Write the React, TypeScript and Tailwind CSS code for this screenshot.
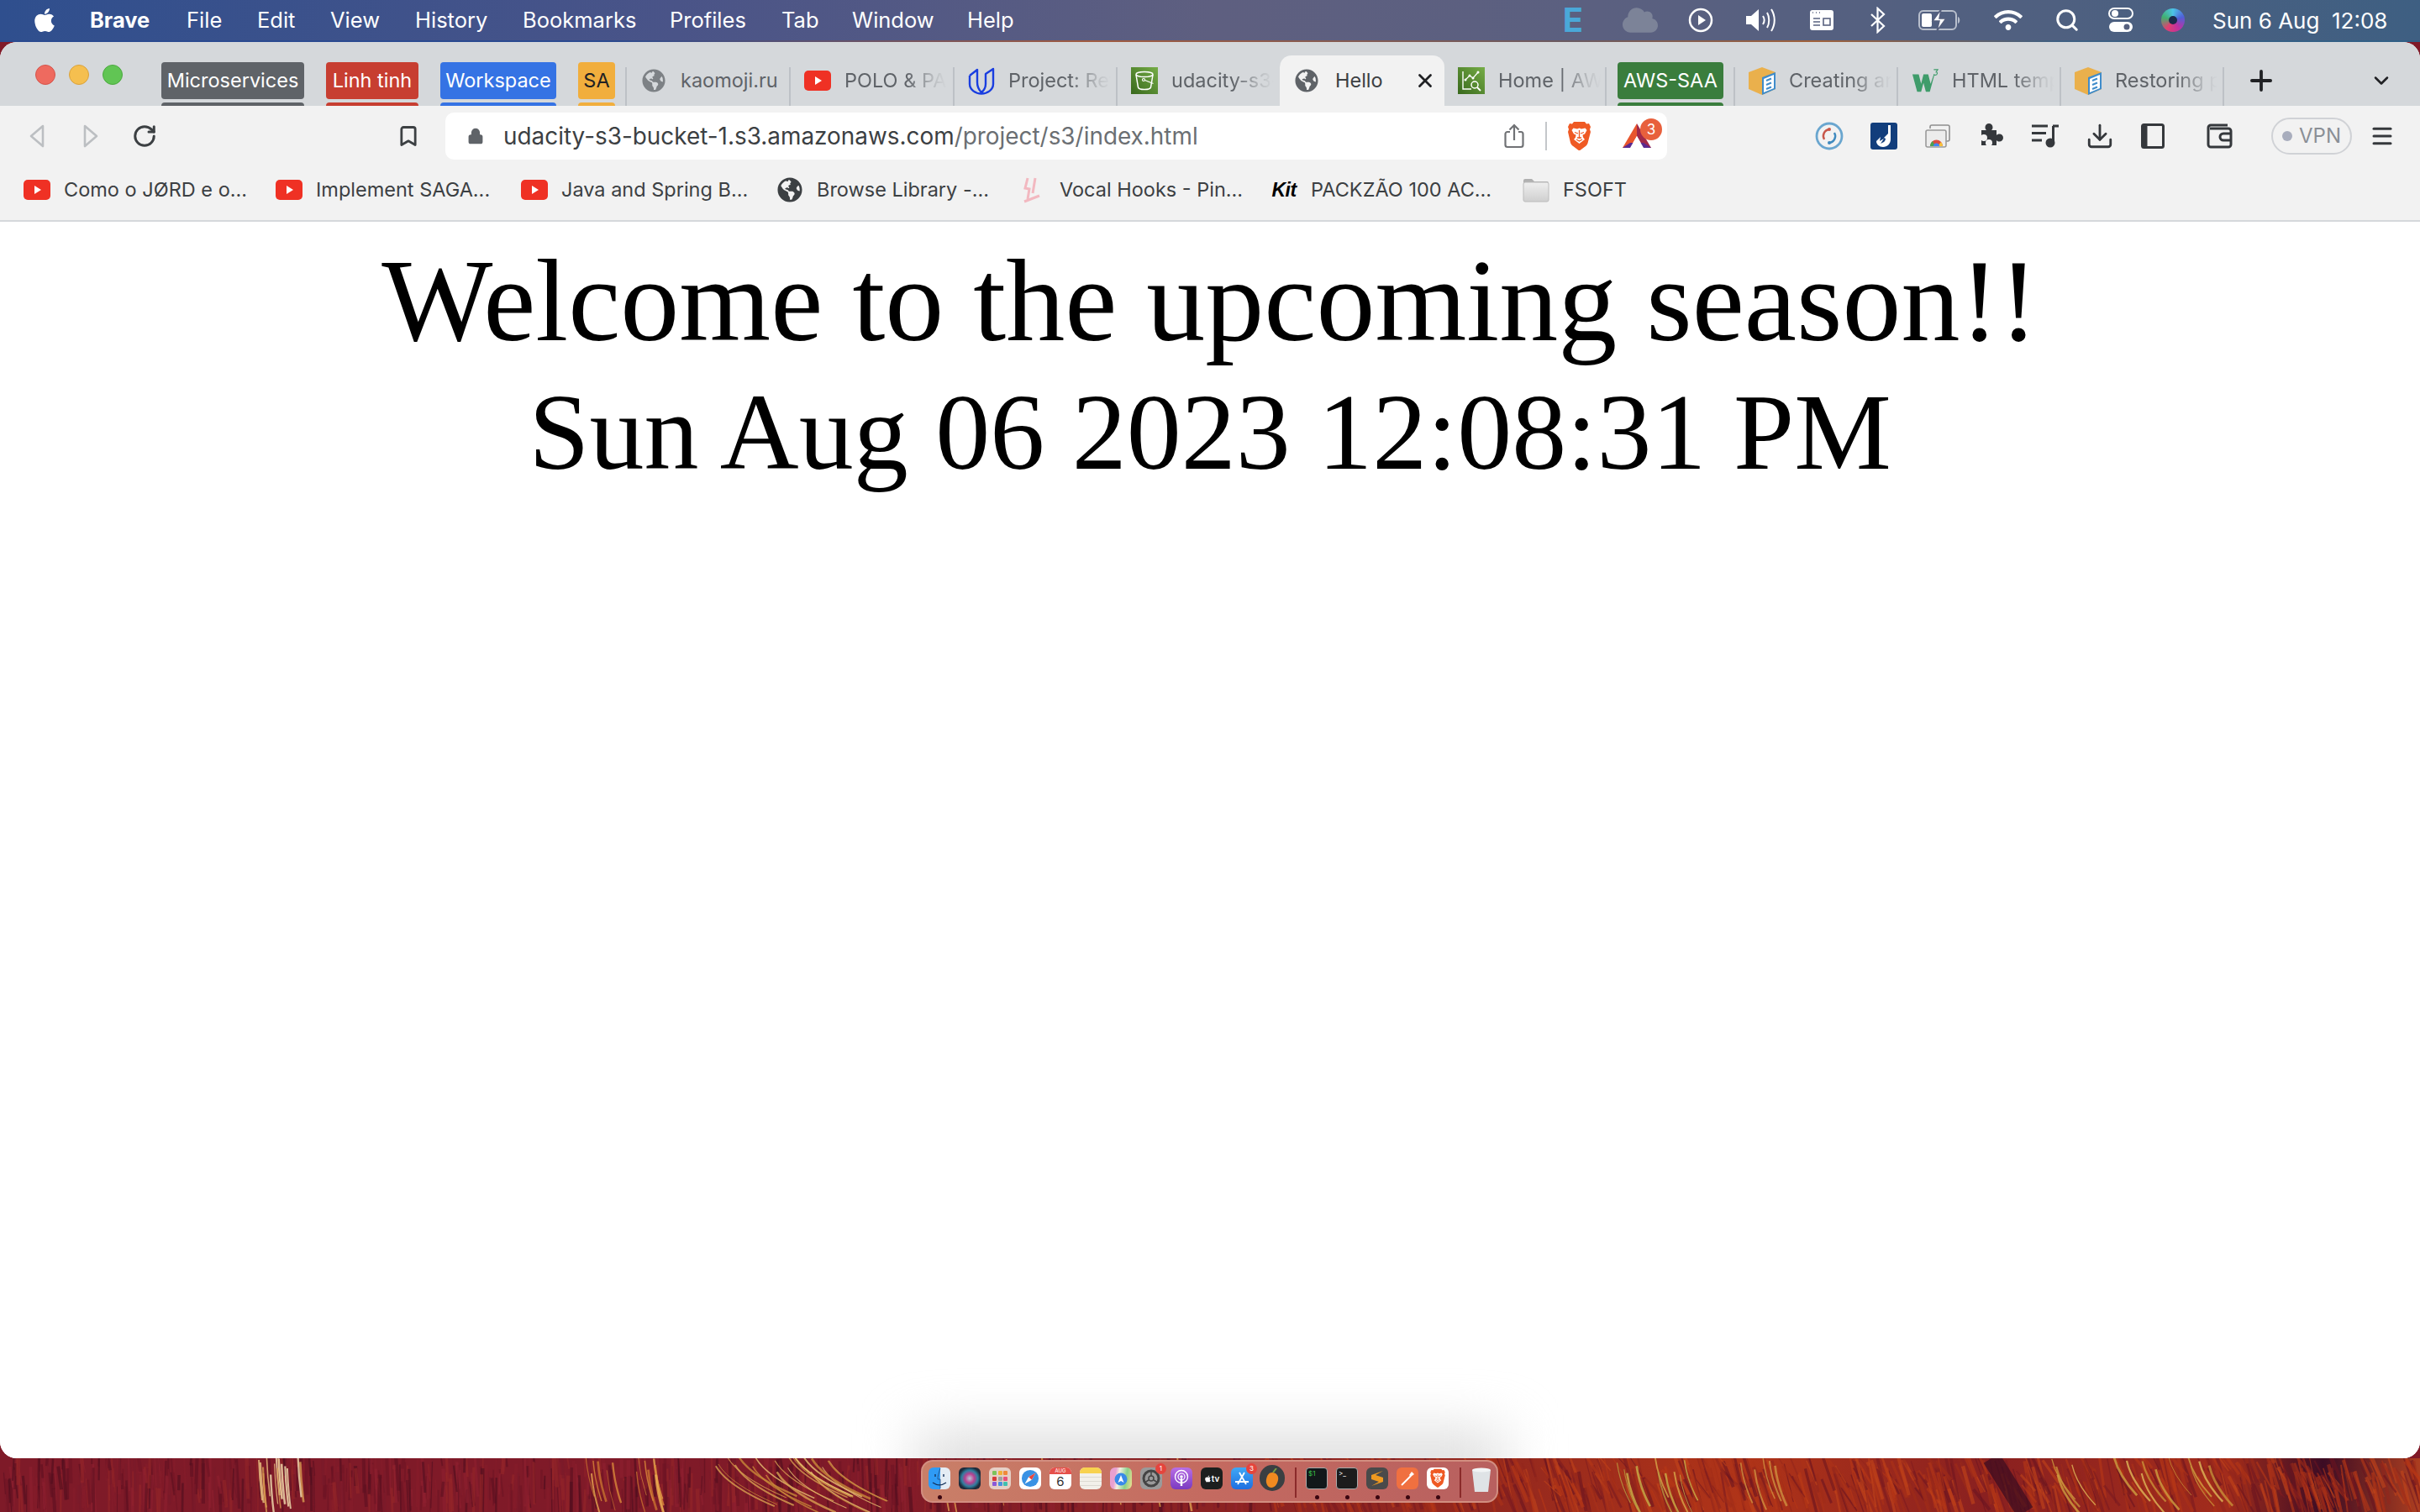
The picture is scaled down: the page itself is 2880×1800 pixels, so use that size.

import React from "react";
import { FaApple, FaGlobeAmericas, FaCloud, FaWifi } from "react-icons/fa";
import { Search, Download, Plus, ChevronDown, X, RotateCw, Bookmark, Lock, Menu } from "lucide-react";

const SANS = "font-['Inter','Liberation_Sans',sans-serif]";

function Wallpaper() {
  let s = 12345;
  const r = () => { s = (s * 16807) % 2147483647; return s / 2147483647; };
  const pick = (a: string[]) => a[Math.floor(r() * a.length)];
  const strokes: React.ReactElement[] = [];
  const darkL = ["#5d1020", "#6e1424", "#861c2a", "#8f2030", "#7a1a2a", "#4f0e1e", "#962628"];
  const darkR = ["#b83816", "#a02c18", "#7a1a20", "#6a1420", "#c2441a", "#93261c", "#ac3218"];
  for (let i = 0; i < 1700; i++) {
    const x = r() * 2880;
    const right = x > 1500;
    const y = r() * 50 - 12;
    const slant = right ? 8 + r() * 12 : -2 + r() * 6;
    const len = 16 + r() * 46;
    const color = pick(right ? darkR : darkL);
    strokes.push(<line key={i} x1={x} y1={y} x2={x + slant} y2={y + len} stroke={color} strokeWidth={1 + r() * 3.4} opacity={0.6} />);
  }
  const clusters: [number, number, number, number, string[]][] = [
    [304, 372, 4, 16, ["#e8c080", "#f4e0b0", "#d89a50"]],
    [696, 784, 10, 14, ["#d8883a", "#e8a850", "#c87030"]],
    [850, 990, 70, 22, ["#d8a050", "#e8c070", "#c88838"]],
    [1120, 1500, 6, 14, ["#e0a050", "#d89040"]],
    [1917, 2006, 16, 10, ["#c8b048", "#d8a848", "#b89a40"]],
    [2070, 2120, 14, 5, ["#d09040"]],
    [2420, 2640, 28, 14, ["#d0a040", "#c89038", "#e0b858"]],
  ];
  clusters.forEach(([a, b, dx, n, colors], ci) => {
    for (let i = 0; i < n; i++) {
      const x = a + r() * (b - a);
      const y = -4 + r() * 24;
      strokes.push(
        <path key={`c${ci}-${i}`} d={`M${x} ${y} Q${x + dx * 0.2} ${y + 24} ${x + dx} ${y + 48}`} fill="none" stroke={pick(colors)} strokeWidth={0.8 + r() * 2} opacity={0.8} />
      );
    }
  });
  return (
    <svg className="absolute bottom-0 left-0" width="2880" height="64" viewBox="0 0 2880 64" aria-hidden="true">
      <defs>
        <linearGradient id="wp" x1="0" x2="1" y1="0" y2="0">
          <stop offset="0" stopColor="#7e1a28" />
          <stop offset="0.35" stopColor="#801a28" />
          <stop offset="0.62" stopColor="#94281e" />
          <stop offset="0.72" stopColor="#b03418" />
          <stop offset="0.82" stopColor="#8a2020" />
          <stop offset="0.92" stopColor="#a22c1c" />
          <stop offset="0.96" stopColor="#3c0c24" />
          <stop offset="1" stopColor="#ac3e20" />
        </linearGradient>
      </defs>
      <rect width="2880" height="64" fill="url(#wp)" />
      {strokes}
      <path d="M2370 0 L2410 64" stroke="#3a0c20" strokeWidth="22" opacity="0.7" />
    </svg>
  );
}

function Yt({ className = "w-[32px] h-[24px]" }: { className?: string }) {
  return (
    <svg className={className} viewBox="0 0 32 24" aria-hidden="true">
      <rect width="32" height="24" rx="5" fill="#ef3124" />
      <path d="M13 7l8 5-8 5z" fill="#fff" />
    </svg>
  );
}

function Cube() {
  return (
    <svg className="w-[32px] h-[33px]" viewBox="0 0 32 33" aria-hidden="true">
      <path d="M16 0L32 6v20L16 33 0 26V6z" fill="#eab04c" />
      <path d="M16 12L32 6v20L16 33z" fill="#3f8ccb" />
      <path d="M18 14l12-5v16l-12 5z" fill="#fff" />
      <path d="M21 16l6-2.5M21 21l6-2.5M21 26l6-2.5" stroke="#3f8ccb" strokeWidth="2" />
    </svg>
  );
}

function Brave({ className = "w-[27px] h-[37px]" }: { className?: string }) {
  return (
    <svg className={className} viewBox="0 0 27 37" aria-hidden="true">
      <path d="M7 1h13l2 2.5 3-.5 2 4-1 3 1 3-3.5 13.5c-.6 2-2 3.200-3.500 4.300L15 34.500c-1 .8-2 .8-3 0l-5.500-4.200C5 29.200 3.600 28 3 26L0 13l1-3-1-3 2-4 3 .5z" fill="#ef5a24" />
      <path d="M6.500 8.500l4.500 1 2.500-1 2.500 1 4.500-1 2 2.500-2.500 4.500-2.500 1 .5 3 2 2.500-6.500 5-6.500-5 2-2.500.5-3-2.500-1L4.500 11z" fill="#fff" />
      <path d="M8 13.500l4 1.500M19 13.500l-4 1.500M13.500 11v10M10 22l3.500 2 3.500-2M11 20h5" stroke="#ef5a24" strokeWidth="1.3" fill="none" />
    </svg>
  );
}

function Chip({ label, bg, w, ml, dark }: { label: string; bg: string; w: string; ml: string; dark?: boolean }) {
  return (
    <div className={`flex flex-col shrink-0 pt-[24px] h-full overflow-hidden ${w} ${ml}`}>
      <div className={`h-[44px] shrink-0 rounded-[4px] flex items-center justify-center text-[23.5px] whitespace-nowrap ${bg} ${dark ? "text-[#202124]" : "text-white"}`}>{label}</div>
      <div className={`mt-[4px] h-[10px] shrink-0 rounded-t-[4px] ${bg}`} />
    </div>
  );
}

function Tab({ icon, label, fade = true, sep = true, w = "w-[195px]" }: { icon: React.ReactNode; label: string; fade?: boolean; sep?: boolean; w?: string }) {
  return (
    <div className={`relative shrink-0 h-full pt-[30px] pl-[16px] flex items-start gap-[16px] ${w}`}>
      <div className="w-[32px] h-[32px] flex items-center justify-center shrink-0">{icon}</div>
      <div className={`w-[122px] overflow-hidden whitespace-nowrap text-[23.5px] leading-[32px] text-[#5f6368] ${fade ? "[mask-image:linear-gradient(to_right,#000_60%,#0003_88%,transparent_100%)]" : ""}`}>{label}</div>
      {sep && <div className="absolute right-0 top-[30px] bottom-0 w-[2px] bg-[#bdc1c6]" />}
    </div>
  );
}

function Mark({ label, icon, w }: { label: string; icon: React.ReactNode; w: string }) {
  return (
    <div className={`flex items-center shrink-0 ${w}`}>
      <div className="w-[32px] h-[32px] flex items-center justify-center shrink-0 mr-[16px]">{icon}</div>
      <span className="text-[23.5px] text-[#3c4043] whitespace-nowrap">{label}</span>
    </div>
  );
}

function TB({ children, ml }: { children: React.ReactNode; ml: string }) {
  return <div className={`w-[44px] h-[44px] shrink-0 flex items-center justify-center ${ml}`}>{children}</div>;
}

function DockItem({ children, dot, badge, w = "w-[26px]", ml = "ml-[10px]" }: { children: React.ReactNode; dot?: boolean; badge?: string; w?: string; ml?: string }) {
  return (
    <div className={`relative h-[26px] shrink-0 ${w} ${ml}`}>
      {children}
      {badge && <div className="absolute -top-[5px] -right-[5px] w-[13px] h-[13px] rounded-full bg-[#e5443c] text-white text-[8px] leading-[13px] text-center">{badge}</div>}
      {dot && <div className="absolute left-[11px] top-[33px] w-[5px] h-[5px] rounded-full bg-[#3a0610]" />}
    </div>
  );
}

function Tile({ children, bg }: { children?: React.ReactNode; bg: string }) {
  return <div className={`w-[26px] h-[26px] rounded-[6px] overflow-hidden flex items-center justify-center ${bg}`}>{children}</div>;
}

function MI({ children, w, ml }: { children: React.ReactNode; w: string; ml: string }) {
  return <div className={`flex items-center justify-center shrink-0 text-white ${w} ${ml}`}>{children}</div>;
}

export default function App() {
  return (
    <div className={`relative w-[2880px] h-[1800px] overflow-hidden bg-[#801a28] ${SANS}`}>
      <Wallpaper />
      <div className="relative h-[48px] flex items-center bg-[linear-gradient(90deg,#2f4f8e_0%,#4a5488_28%,#5e5f80_50%,#5b6080_66%,#4f6080_85%,#3e5f82_100%)]">
        <div className="w-[30px] ml-[38px] flex justify-center shrink-0"><FaApple className="text-white text-[32px]" /></div>
        <div className="w-[1789px] shrink-0 flex items-center text-[25.5px] text-white">
          <div className="w-[115px] ml-[39px] shrink-0 font-bold">Brave</div>
          <div className="w-[84px] shrink-0">File</div>
          <div className="w-[87px] shrink-0">Edit</div>
          <div className="w-[101px] shrink-0">View</div>
          <div className="w-[128px] shrink-0">History</div>
          <div className="w-[175px] shrink-0">Bookmarks</div>
          <div className="w-[133px] shrink-0">Profiles</div>
          <div className="w-[84px] shrink-0">Tab</div>
          <div className="w-[137px] shrink-0">Window</div>
          <div className="w-[70px] shrink-0">Help</div>
        </div>
        <MI w="w-[30px]" ml="ml-0"><span className="text-[40px] font-bold leading-[48px] text-[#4aa8d8]">E</span></MI>
        <MI w="w-[50px]" ml="ml-[40px]"><FaCloud className="text-[#7c8398] text-[42px]" /></MI>
        <MI w="w-[34px]" ml="ml-[30px]">
          <svg width="30" height="30" viewBox="0 0 30 30" aria-hidden="true"><circle cx="15" cy="15" r="13" fill="none" stroke="#fff" strokeWidth="2.5" /><path d="M12 9l9 6-9 6z" fill="#fff" /></svg>
        </MI>
        <MI w="w-[42px]" ml="ml-[34px]">
          <svg width="40" height="30" viewBox="0 0 40 30" aria-hidden="true"><path d="M2 10h6l9-8v26l-9-8H2z" fill="#fff" /><path d="M22 10c2 3 2 7 0 10M27 6c3 5 3 13 0 18M32 2c5 8 5 18 0 26" fill="none" stroke="#fff" strokeWidth="2" /></svg>
        </MI>
        <MI w="w-[32px]" ml="ml-[35px]">
          <svg width="30" height="26" viewBox="0 0 30 26" aria-hidden="true"><rect x="1" y="1" width="28" height="24" rx="3" fill="#fff" /><path d="M5 11h8M5 15h8M5 19h8" stroke="#5a6380" strokeWidth="1.6" /><path d="M4 4h1M8 4h1M12 4h1" stroke="#5a6380" strokeWidth="1.4" /><rect x="17" y="11" width="8" height="8" fill="none" stroke="#5a6380" strokeWidth="1.6" /></svg>
        </MI>
        <MI w="w-[24px]" ml="ml-[39px]">
          <svg width="20" height="32" viewBox="0 0 20 32" aria-hidden="true"><path d="M2 9l15 14-7.500 7V2L17 9 2 23" fill="none" stroke="#fff" strokeWidth="2.200" /></svg>
        </MI>
        <MI w="w-[52px]" ml="ml-[36px]">
          <svg width="52" height="26" viewBox="0 0 52 26" aria-hidden="true"><rect x="1" y="2" width="44" height="22" rx="5" fill="none" stroke="#b8bfcc" strokeWidth="2" /><rect x="4" y="5" width="12" height="16" rx="2" fill="#fff" /><path d="M47 9c3 1 3 7 0 8z" fill="#b8bfcc" /><path d="M27 0L17 14h8l-3 12 11-15h-8z" fill="#fff" stroke="#56607e" strokeWidth="1.5" /></svg>
        </MI>
        <MI w="w-[36px]" ml="ml-[37px]"><FaWifi className="text-white text-[34px]" /></MI>
        <MI w="w-[30px]" ml="ml-[37px]"><Search className="text-white w-[30px] h-[30px]" strokeWidth={2.4} /></MI>
        <MI w="w-[30px]" ml="ml-[34px]">
          <svg width="30" height="30" viewBox="0 0 30 30" aria-hidden="true"><rect x="1" y="1" width="28" height="12" rx="6" fill="none" stroke="#fff" strokeWidth="2" /><circle cx="8" cy="7" r="4" fill="#fff" /><rect x="1" y="17" width="28" height="12" rx="6" fill="#fff" /><circle cx="22" cy="23" r="3.5" fill="#56607e" /></svg>
        </MI>
        <MI w="w-[30px]" ml="ml-[32px]">
          <div className="w-[28px] h-[28px] rounded-full bg-[conic-gradient(#4cc4e8,#5060d8,#c030a0,#e04070,#40b070,#4cc4e8)] flex items-center justify-center"><div className="w-[10px] h-[10px] rounded-full bg-[#1c2a4a]" /></div>
        </MI>
        <div className="ml-[32px] text-[26px] text-white whitespace-pre shrink-0">Sun 6 Aug  12:08</div>
      </div>
      <div className="relative h-[2px] bg-[linear-gradient(90deg,#2a4a90_0%,#2a4a90_25%,#a05a40_45%,#6a5a60_65%,#a0603a_75%,#3e5f82_85%,#2f5f86_100%)]" />

      <div className="relative h-[1686px] rounded-[20px] overflow-hidden bg-white flex flex-col">
        <div className="h-[76px] bg-[#d5d8db] flex items-stretch shrink-0">
          <div className="flex w-[192px] shrink-0 pt-[27px] pl-[42px] gap-[16px]">
            <div className="w-[24px] h-[24px] rounded-full bg-[#ee6a5f] border border-[#d5534a]" />
            <div className="w-[24px] h-[24px] rounded-full bg-[#f5bf4f] border border-[#d9a23c]" />
            <div className="w-[24px] h-[24px] rounded-full bg-[#61c554] border border-[#4ba93f]" />
          </div>
          <Chip label="Microservices" bg="bg-[#5f6368]" w="w-[170px]" ml="" />
          <Chip label="Linh tinh" bg="bg-[#c73e31]" w="w-[110px]" ml="ml-[26px]" />
          <Chip label="Workspace" bg="bg-[#3573e4]" w="w-[138px]" ml="ml-[26px]" />
          <Chip label="SA" bg="bg-[#f1ae3d]" w="w-[44px]" ml="ml-[26px]" dark />
          <div className="ml-[12px] w-[2px] mt-[30px] bg-[#bdc1c6]" />
          <Tab label="kaomoji.ru" fade={false} icon={<FaGlobeAmericas className="text-[#7d8185] text-[28px]" />} />
          <Tab label="POLO & PAN" icon={<Yt />} />
          <Tab label="Project: Refactor" w="w-[194px]" icon={
            <svg width="32" height="33" viewBox="0 0 32 33" aria-hidden="true"><path d="M2 10L11 3V18C11 24 13 27 16 30M2 10V20C2 27 9 31.500 16 31.500C23 31.500 30 27 30 20V2L21 8V20C21 25 18.500 28 16 30" fill="none" stroke="#1a3ee0" strokeWidth="2.400" strokeLinejoin="round" /></svg>
          } />
          <Tab label="udacity-s3-bucket" sep={false} w="w-[193px]" icon={
            <svg width="32" height="32" viewBox="0 0 32 32" aria-hidden="true"><defs><linearGradient id="awsg" x1="0" y1="1" x2="1" y2="0"><stop offset="0" stopColor="#38681c" /><stop offset="1" stopColor="#76ad47" /></linearGradient></defs><rect width="32" height="32" fill="url(#awsg)" /><path d="M6 9l2.500 15c.3 1.500 3.500 2.500 7.500 2.500s7.200-1 7.500-2.500L26 9" fill="none" stroke="#fff" strokeWidth="1.500" /><ellipse cx="16" cy="8.500" rx="10" ry="3" fill="none" stroke="#fff" strokeWidth="1.500" /><circle cx="15" cy="15" r="1.500" fill="none" stroke="#fff" strokeWidth="1.200" /><path d="M16.500 15.500l10 4" stroke="#fff" strokeWidth="1.300" /></svg>
          } />
          <div className="relative shrink-0 w-[196px] mt-[16px] pt-[14px] pl-[18px] bg-[#f2f2f2] rounded-t-[14px] flex items-start text-[#3c4043]">
            <div className="w-[28px] h-[32px] flex items-center justify-center shrink-0"><FaGlobeAmericas className="text-[#5f6368] text-[28px]" /></div>
            <span className="ml-[20px] leading-[32px] text-[23.5px]">Hello</span>
            <X className="absolute left-[160px] top-[17px] w-[26px] h-[26px] text-[#202124]" strokeWidth={2.6} />
          </div>
          <Tab label="Home | AWS" w="w-[193px]" icon={
            <svg width="32" height="32" viewBox="0 0 32 32" aria-hidden="true"><defs><linearGradient id="awsg2" x1="0" y1="1" x2="1" y2="0"><stop offset="0" stopColor="#38681c" /><stop offset="1" stopColor="#76ad47" /></linearGradient></defs><rect width="32" height="32" fill="url(#awsg2)" /><path d="M6 5v21h10" fill="none" stroke="#fff" strokeWidth="1.400" /><path d="M9 15l5-5 4 3 6-7" fill="none" stroke="#fff" strokeWidth="1.200" /><circle cx="9" cy="15" r="1.500" fill="#fff" /><circle cx="14" cy="10" r="1.500" fill="#fff" /><circle cx="18" cy="13" r="1.500" fill="#fff" /><circle cx="24" cy="6" r="1.500" fill="#fff" /><circle cx="20" cy="21" r="4" fill="none" stroke="#fff" strokeWidth="1.500" /><path d="M23 24l4 4" stroke="#fff" strokeWidth="1.800" /></svg>
          } />
          <Chip label="AWS-SAA" bg="bg-[#3a7d3d]" w="w-[126px]" ml="ml-[13px]" />
          <div className="ml-[12px] w-[2px] mt-[30px] bg-[#bdc1c6]" />
          <Tab label="Creating an object" w="w-[194px]" icon={<Cube />} />
          <Tab label="HTML template" w="w-[194px]" icon={
            <svg width="34" height="30" viewBox="0 0 34 30" aria-hidden="true"><path d="M1 7h8l3 12 3-12h6l3 12 4-12h1l-6 22h-5l-3-11-3 11H7z" fill="#3f9c6b" /><path d="M28 1h5l-2 3c2 0 2 4-1 4-1 0-2 0-2-1" fill="none" stroke="#3f9c6b" strokeWidth="1.2" /></svg>
          } />
          <Tab label="Restoring previous" w="w-[194px]" icon={<Cube />} />
          <div className="ml-[25px] pt-[27px] shrink-0"><Plus className="w-[38px] h-[38px] text-[#202124]" strokeWidth={2.4} /></div>
          <div className="ml-[110px] pt-[32px] shrink-0"><ChevronDown className="w-[28px] h-[28px] text-[#202124]" strokeWidth={2.2} /></div>
        </div>

        <div className="h-[138px] shrink-0 bg-[#f2f2f2] border-b-2 border-[#d5d8db] flex flex-col">
          <div className="h-[72px] flex items-center shrink-0">
            <div className="ml-[22px] w-[44px] flex justify-center shrink-0">
              <svg width="20" height="28" viewBox="0 0 20 28" aria-hidden="true"><path d="M17 2L3 14l14 12z" fill="none" stroke="#bcbfc2" strokeWidth="2.6" strokeLinejoin="round" /></svg>
            </div>
            <div className="ml-[20px] w-[44px] flex justify-center shrink-0">
              <svg width="20" height="28" viewBox="0 0 20 28" aria-hidden="true"><path d="M3 2l14 12L3 26z" fill="none" stroke="#bcbfc2" strokeWidth="2.6" strokeLinejoin="round" /></svg>
            </div>
            <div className="ml-[20px] w-[44px] flex justify-center shrink-0"><RotateCw className="w-[30px] h-[30px] text-[#3c4043]" strokeWidth={2.4} /></div>
            <div className="ml-[270px] w-[44px] flex justify-center shrink-0"><Bookmark className="w-[28px] h-[30px] text-[#3c4043]" strokeWidth={2.4} /></div>
            <div className="ml-[22px] w-[1454px] h-[56px] bg-white rounded-[10px] flex items-center shrink-0 relative">
              <Lock className="ml-[26px] w-[20px] h-[22px] text-[#5f6368] fill-[#5f6368]" strokeWidth={2.2} />
              <div className="ml-[23px] pt-[2px] text-[27.9px] whitespace-nowrap text-[#3c4043]">udacity-s3-bucket-1.s3.amazonaws.com<span className="text-[#6b6f73]">/project/s3/index.html</span></div>
              <div className="absolute left-[1260px] top-[13px]">
                <svg width="24" height="30" viewBox="0 0 24 30" aria-hidden="true"><path d="M7 10H4a2.500 2.500 0 0 0-2.500 2.500v13A2.500 2.500 0 0 0 4 28h16a2.500 2.500 0 0 0 2.500-2.500v-13A2.500 2.500 0 0 0 20 10h-3M12 20V2M6.500 7.500L12 2l5.500 5.500" fill="none" stroke="#707275" strokeWidth="2.200" /></svg>
              </div>
              <div className="absolute left-[1309px] top-[11px] w-[2px] h-[34px] bg-[#c4c7ca]" />
              <div className="absolute left-[1336px] top-[10px]"><Brave /></div>
              <div className="absolute left-[1400px] top-[12px]">
                <svg width="36" height="32" viewBox="0 0 36 32" aria-hidden="true"><path d="M18 1L1 30h9L18 16z" fill="#e8552d" /><path d="M18 1l17 29h-9L18 16z" fill="#a12a4a" /><path d="M1 30h34l-9-6H10z" fill="#5a2a90" /><path d="M18 16l8 14H10z" fill="#fff" /></svg>
                <div className="absolute -top-[5px] left-[22px] w-[26px] h-[26px] rounded-full bg-[#e8603c] text-white text-[17px] leading-[26px] text-center">3</div>
              </div>
            </div>
            <TB ml="ml-[171px]">
              <svg width="34" height="34" viewBox="0 0 34 34" aria-hidden="true"><circle cx="17" cy="17" r="15" fill="none" stroke="#6aa6cf" strokeWidth="2.800" /><path d="M11 21a8 8 0 0 1 6-12" fill="none" stroke="#c8574a" strokeWidth="2.400" /><circle cx="17" cy="9" r="2" fill="#c8574a" /><path d="M23 13a8 8 0 0 1-6 12" fill="none" stroke="#3f8abf" strokeWidth="2.400" /><circle cx="17" cy="25" r="2" fill="#3f8abf" /></svg>
            </TB>
            <TB ml="ml-[21px]">
              <svg width="32" height="32" viewBox="0 0 32 32" aria-hidden="true"><rect width="32" height="32" rx="3" fill="#123e7c" /><path d="M21 3h3v17c0 5-4 9-9 9-4.500 0-8-3-8-7l5-5-1 5 5-3-4 6 4-2c1-1 2-2.500 2-4l-2-1 5-5z" fill="#fff" /></svg>
            </TB>
            <TB ml="ml-[20px]">
              <svg width="30" height="28" viewBox="0 0 30 28" aria-hidden="true"><path d="M6 5V3a2 2 0 0 1 2-2h19a2 2 0 0 1 2 2v15a2 2 0 0 1-2 2h-2" fill="none" stroke="#8f8f8f" strokeWidth="1.600" /><rect x="1" y="7" width="24" height="20" rx="2" fill="#ececec" stroke="#9a9a9a" strokeWidth="1.600" /><path d="M6 26a7.500 7.500 0 0 1 15 0z" fill="#dd4b3e" /><path d="M6 26a7.500 7.500 0 0 1 3-6l3 6z" fill="#4aa152" /><path d="M21 26a7.500 7.500 0 0 0-2-5l-4 5z" fill="#f6c33a" /><path d="M10 26a3.500 3.500 0 0 1 7 0z" fill="#4285f4" /></svg>
            </TB>
            <TB ml="ml-[20px]">
              <svg width="30" height="30" viewBox="0 0 30 30" aria-hidden="true"><path d="M3 8h6c-1-1-1.500-2-1.500-3.500a4.500 4.500 0 0 1 9 0c0 1.500-.5 2.500-1.500 3.500h6v6c1-1 2-1.500 3.500-1.500a4.500 4.500 0 0 1 0 9c-1.500 0-2.500-.5-3.500-1.500v6h-6c.8-1 1.200-2 1-3a4 4 0 0 0-8 0c-.2 1 .2 2 1 3H3v-6c1 .8 2 1.200 3 1a4 4 0 0 0 0-8c-1-.2-2 .2-3 1z" fill="#35383c" /></svg>
            </TB>
            <TB ml="ml-[20px]">
              <svg width="34" height="30" viewBox="0 0 34 30" aria-hidden="true"><path d="M1 3h19M1 11.500h17M1 20h12" stroke="#35383c" strokeWidth="3" /><path d="M26.500 3v20" stroke="#35383c" strokeWidth="3" /><path d="M26 3h7" stroke="#35383c" strokeWidth="3" /><circle cx="23" cy="23" r="5.500" fill="#35383c" /></svg>
            </TB>
            <TB ml="ml-[21px]"><Download className="w-[34px] h-[34px] text-[#35383c]" strokeWidth={2} /></TB>
            <TB ml="ml-[19px]">
              <svg width="28" height="30" viewBox="0 0 28 30" aria-hidden="true"><rect x="1.500" y="1.500" width="25" height="27" rx="2" fill="none" stroke="#35383c" strokeWidth="3" /><rect x="1.500" y="1.500" width="6" height="27" fill="#35383c" /></svg>
            </TB>
            <TB ml="ml-[36px]">
              <svg width="32" height="30" viewBox="0 0 32 30" aria-hidden="true"><path d="M4 6h22a3 3 0 0 1 3 3v16a3 3 0 0 1-3 3H5a3 3 0 0 1-3-3V5a3 3 0 0 1 3-3h20" fill="none" stroke="#35383c" strokeWidth="3" /><path d="M29 12h-9a3.500 3.500 0 0 0 0 8h9" fill="none" stroke="#35383c" strokeWidth="3" /></svg>
            </TB>
            <div className="ml-[39px] w-[96px] h-[44px] rounded-full border-2 border-[#d0d2d6] flex items-center justify-center gap-[8px] shrink-0">
              <div className="w-[12px] h-[12px] rounded-full bg-[#a8adbd]" />
              <span className="text-[24px] text-[#8a8f96]">VPN</span>
            </div>
            <div className="ml-[14px] w-[44px] flex justify-center shrink-0"><Menu className="w-[30px] h-[34px] text-[#35383c]" strokeWidth={2.4} /></div>
          </div>
          <div className="flex-1 flex items-center pl-[28px] pb-[8px]">
            <Mark w="w-[300px]" label="Como o JØRD e o..." icon={<Yt />} />
            <Mark w="w-[292px]" label="Implement SAGA..." icon={<Yt />} />
            <Mark w="w-[304px]" label="Java and Spring B..." icon={<Yt />} />
            <Mark w="w-[289px]" label="Browse Library -..." icon={<FaGlobeAmericas className="text-[#3c4043] text-[30px]" />} />
            <Mark w="w-[299px]" label="Vocal Hooks - Pin..." icon={
              <svg width="24" height="32" viewBox="0 0 24 32" aria-hidden="true"><path d="M6 2L3 14l5 1-2 12M15 2l-3 18M2 30l18-7" fill="none" stroke="#f2b8c0" strokeWidth="3" /></svg>
            } />
            <Mark w="w-[300px]" label="PACKZÃO 100 AC..." icon={<span className="text-[23px] font-black italic font-['Liberation_Sans',sans-serif] text-black tracking-tight">Kit</span>} />
            <Mark w="w-[120px]" label="FSOFT" icon={
              <svg width="32" height="30" viewBox="0 0 32 30" aria-hidden="true"><defs><linearGradient id="fold" x1="0" y1="0" x2="0" y2="1"><stop offset="0" stopColor="#efefef" /><stop offset="1" stopColor="#cfcfcf" /></linearGradient></defs><path d="M1 4a2 2 0 0 1 2-2h8l3 3h15a2 2 0 0 1 2 2v4H1z" fill="#b0b0b0" /><rect x="1" y="6" width="30" height="23" rx="2" fill="url(#fold)" stroke="#bcbcbc" /></svg>
            } />
          </div>
        </div>

        <div className="flex-1 relative overflow-hidden bg-white font-['Liberation_Serif',serif] text-black text-center pt-[17px]">
          <div className="text-[140px] leading-[154px] mb-[7px]">Welcome to the upcoming season!!</div>
          <div className="text-[130px] leading-[144px]">Sun Aug 06 2023 12:08:31 PM</div>
          <div className="absolute left-[1090px] -bottom-[40px] w-[700px] h-[70px] bg-[#dcdcdc] blur-[32px]" />
        </div>
      </div>

      <div className="absolute left-[1096px] top-[1738px] w-[687px] h-[51px] rounded-[14px] border-2 border-[#d28e80] bg-[linear-gradient(90deg,#c97f68_0%,#c46a60_50%,#b8605f_100%)] flex items-start pt-[7px] pl-[7px]">
        <DockItem dot ml="ml-0"><Tile bg="bg-[linear-gradient(90deg,#2f9bf5_52%,#e4ecf4_52%)]">
          <svg width="26" height="26" viewBox="0 0 26 26" aria-hidden="true"><path d="M14 1c-2 6-3 9-3 13h3v11" fill="none" stroke="#1e4a80" strokeWidth="0.800" /><path d="M5 18c5 3.500 11 3.500 16 0" fill="none" stroke="#14315a" strokeWidth="1.200" /><path d="M8 8v3M18 8v3" stroke="#14315a" strokeWidth="1.400" /></svg>
        </Tile></DockItem>
        <DockItem><Tile bg="bg-[radial-gradient(circle,#b8c8d8_0%,#b84090_30%,#3080a0_52%,#1e2a3a_72%)]" /></DockItem>
        <DockItem><Tile bg="bg-[#e6d0c6]">
          <div className="grid grid-cols-3 gap-[1.500px]">
            {["bg-[#7cc35b]","bg-[#f0b038]","bg-[#f08a3a]","bg-[#d83a3a]","bg-[#a0a0a0]","bg-[#e8507a]","bg-[#8a5ad8]","bg-[#4a90e0]","bg-[#40c0b0]"].map((c, i) => <div key={i} className={`w-[5px] h-[5px] rounded-[1px] ${c}`} />)}
          </div>
        </Tile></DockItem>
        <DockItem><Tile bg="bg-white">
          <svg width="22" height="22" viewBox="0 0 24 24" aria-hidden="true"><circle cx="12" cy="12" r="11" fill="#3a92e4" /><path d="M19 5L10 10l-5 9 9-5z" fill="#fff" /><path d="M19 5l-9 5 4 4z" fill="#e8453c" /></svg>
        </Tile></DockItem>
        <DockItem><div className="w-[26px] h-[26px] rounded-[6px] overflow-hidden bg-white flex flex-col items-center">
          <div className="w-full h-[8px] bg-[#e5504a] text-white text-[6px] leading-[8px] text-center">AUG</div>
          <div className="text-[15px] leading-[18px] text-[#333]">6</div>
        </div></DockItem>
        <DockItem><div className="w-[26px] h-[26px] rounded-[6px] overflow-hidden bg-[#f2f0ea] flex flex-col">
          <div className="h-[7px] shrink-0 bg-[#f8d24e]" />
          <div className="h-[5px] border-b border-[#dcdad2]" />
          <div className="h-[5px] border-b border-[#dcdad2]" />
          <div className="h-[5px] border-b border-[#dcdad2]" />
        </div></DockItem>
        <DockItem><Tile bg="bg-[linear-gradient(100deg,#e8a0d0_0%,#e8a0d0_25%,#f4f0e0_40%,#8ad08a_70%,#f4e090_100%)]">
          <svg width="16" height="18" viewBox="0 0 16 18" aria-hidden="true"><circle cx="8" cy="10" r="7.500" fill="#3a8ae8" /><path d="M8 5l3.500 9L8 12l-3.500 2z" fill="#fff" /></svg>
        </Tile></DockItem>
        <DockItem badge="1"><Tile bg="bg-[#9a9a9a]">
          <svg width="24" height="24" viewBox="0 0 24 24" aria-hidden="true"><circle cx="12" cy="12" r="9" fill="none" stroke="#444" strokeWidth="3" /><circle cx="12" cy="12" r="3" fill="none" stroke="#444" strokeWidth="1.500" /><path d="M12 3v6M4 17l5-3M20 17l-5-3" stroke="#444" strokeWidth="1.500" /></svg>
        </Tile></DockItem>
        <DockItem><Tile bg="bg-[linear-gradient(180deg,#b86ee6,#7a3ac0)]">
          <svg width="22" height="22" viewBox="0 0 22 22" aria-hidden="true"><circle cx="11" cy="9" r="7.500" fill="none" stroke="#fff" strokeWidth="1.400" /><circle cx="11" cy="9" r="4" fill="none" stroke="#fff" strokeWidth="1.200" /><circle cx="11" cy="9" r="1.800" fill="#fff" /><path d="M11 11v9" stroke="#fff" strokeWidth="2.400" /></svg>
        </Tile></DockItem>
        <DockItem><Tile bg="bg-[#1c1f1e]"><FaApple className="text-white text-[9px]" /><span className="text-white text-[10px] font-semibold">tv</span></Tile></DockItem>
        <DockItem badge="3"><Tile bg="bg-[linear-gradient(180deg,#3fa8f5,#1f6fe0)]">
          <svg width="20" height="20" viewBox="0 0 20 20" aria-hidden="true"><path d="M7 3l8 14M13 3L5 17M2 14h16" stroke="#fff" strokeWidth="1.800" /></svg>
        </Tile></DockItem>
        <DockItem w="w-[30px]" ml="ml-[8px]"><div className="w-[30px] h-[31px] -mt-[3px] rounded-full bg-[#3a3f42] flex items-center justify-center">
          <svg width="18" height="24" viewBox="0 0 18 24" aria-hidden="true"><path d="M9 5c5 0 8 4 7 9s-4 9-8 9c-4 0-7-5-6-10s3-8 7-8z" fill="#f08a20" /><path d="M10 5l4-5" stroke="#7aa040" strokeWidth="2" /></svg>
        </div></DockItem>
        <div className="ml-[12px] w-[2px] h-[36px] bg-[#8a2a2a] shrink-0" />
        <DockItem dot ml="ml-[11px]"><div className="w-[26px] h-[26px] rounded-[4px] bg-[#12181a] border border-[#aaa] text-[#39c04a] text-[8px] px-[2px]">$1</div></DockItem>
        <DockItem dot><div className="w-[26px] h-[26px] rounded-[4px] bg-[#1c1c1c] border border-[#aaa] text-white text-[8px] px-[2px]">&gt;_</div></DockItem>
        <DockItem dot><Tile bg="bg-[#4a4a4a]">
          <svg width="16" height="20" viewBox="0 0 16 20" aria-hidden="true"><path d="M15 1L1 6v5l9 3-9 5 14-5V9L6 6z" fill="#f09a20" /></svg>
        </Tile></DockItem>
        <DockItem dot><Tile bg="bg-[#f07040]">
          <svg width="18" height="20" viewBox="0 0 18 20" aria-hidden="true"><path d="M2 18L13 7" stroke="#fff" strokeWidth="2" /><path d="M11 6l3-4 3 3-4 3z" fill="#fff" /></svg>
        </Tile></DockItem>
        <DockItem dot><Tile bg="bg-white"><Brave className="w-[18px] h-[24px]" /></Tile></DockItem>
        <div className="ml-[13px] w-[2px] h-[36px] bg-[#8a2a2a] shrink-0" />
        <DockItem ml="ml-[11px]">
          <svg width="26" height="30" viewBox="0 0 26 30" aria-hidden="true"><path d="M2 3h22l-3 26H5z" fill="#dfe3e6" /><ellipse cx="13" cy="3" rx="11" ry="2.500" fill="#f2f4f5" /></svg>
        </DockItem>
      </div>
    </div>
  );
}
